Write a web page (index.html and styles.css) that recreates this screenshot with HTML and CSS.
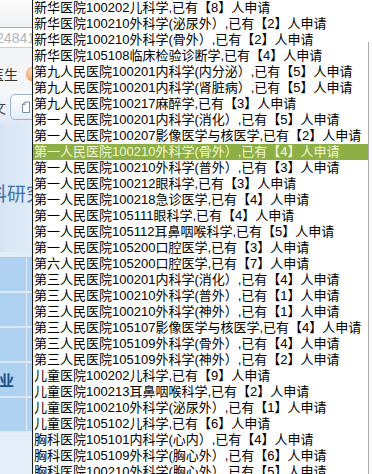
FILE: index.html
```html
<!DOCTYPE html>
<html>
<head>
<meta charset="utf-8">
<title>报名查询</title>
<link rel="stylesheet" href="styles.css">
</head>
<body>
<div class="page">
	<div class="side">
		<div class="topbar"></div>
		<div class="search"><span>24841</span></div>
		<div class="user"><span>主任医生</span><i class="avatar"></i></div>
		<div class="tabs">
			<span class="tab-text">论文</span>
			<span class="tab">
				<svg width="10" height="12" viewBox="0 0 10 12"><path d="M1.5 11.5V3.5L4 1h4.5v10.5z M4 1v2.5H1.5" fill="#fff" stroke="#7a8da3" stroke-width="1"/></svg>
			</span>
		</div>
		<div class="banner"><span>医学科研究</span></div>
		<div class="band"></div>
		<div class="row"><div class="cell"></div><div class="cell"></div></div>
		<div class="row"><div class="cell"></div><div class="cell"></div></div>
		<div class="row"><div class="cell"></div><div class="cell"></div></div>
		<div class="row"><div class="cell"><span>专业</span></div><div class="cell"></div></div>
		<div class="row"><div class="cell"></div><div class="cell"></div></div>
		<div class="rest"></div>
	</div>
	<div class="main">
		<div class="frame"></div>
	</div>
</div>

<ul class="suggest">
	<li>新华医院100202儿科学,已有【8】人申请</li>
	<li>新华医院100210外科学(泌尿外）,已有【2】人申请</li>
	<li>新华医院100210外科学(骨外）,已有【2】人申请</li>
	<li>新华医院105108临床检验诊断学,已有【4】人申请</li>
	<li>第九人民医院100201内科学(内分泌）,已有【5】人申请</li>
	<li>第九人民医院100201内科学(肾脏病）,已有【5】人申请</li>
	<li>第九人民医院100217麻醉学,已有【3】人申请</li>
	<li>第一人民医院100201内科学(消化）,已有【5】人申请</li>
	<li>第一人民医院100207影像医学与核医学,已有【2】人申请</li>
	<li class="on">第一人民医院100210外科学(骨外）,已有【4】人申请</li>
	<li>第一人民医院100210外科学(普外）,已有【3】人申请</li>
	<li>第一人民医院100212眼科学,已有【3】人申请</li>
	<li>第一人民医院100218急诊医学,已有【4】人申请</li>
	<li>第一人民医院105111眼科学,已有【4】人申请</li>
	<li>第一人民医院105112耳鼻咽喉科学,已有【5】人申请</li>
	<li>第一人民医院105200口腔医学,已有【3】人申请</li>
	<li>第六人民医院105200口腔医学,已有【7】人申请</li>
	<li>第三人民医院100201内科学(消化）,已有【4】人申请</li>
	<li>第三人民医院100210外科学(普外）,已有【1】人申请</li>
	<li>第三人民医院100210外科学(神外）,已有【1】人申请</li>
	<li>第三人民医院105107影像医学与核医学,已有【4】人申请</li>
	<li>第三人民医院105109外科学(骨外）,已有【4】人申请</li>
	<li>第三人民医院105109外科学(神外）,已有【2】人申请</li>
	<li>儿童医院100202儿科学,已有【9】人申请</li>
	<li>儿童医院100213耳鼻咽喉科学,已有【2】人申请</li>
	<li>儿童医院100210外科学(泌尿外）,已有【1】人申请</li>
	<li>儿童医院105102儿科学,已有【6】人申请</li>
	<li>胸科医院105101内科学(心内）,已有【4】人申请</li>
	<li>胸科医院105109外科学(胸心外）,已有【6】人申请</li>
	<li>胸科医院100210外科学(胸心外）,已有【5】人申请</li>
</ul>
</body>
</html>
```

FILE: styles.css
```css
body {
	margin:0;
	font-family:"Noto Sans CJK SC", sans-serif;
	background:#fff;
	overflow:hidden;
}
.page {
	display:flex;
	height:474px;
}
.side {
	width:32px;
	flex:none;
	overflow:hidden;
	display:flex;
	flex-direction:column;
	background:#f4f5f7;
}
.side > div {
	display:flex;
	justify-content:flex-end;
	align-items:center;
	white-space:nowrap;
	flex:none;
}
.side > div > * { flex:none; }
.topbar {
	height:27px;
	background:linear-gradient(#fbfbfb, #f0f1f3);
}
.search {
	height:19px;
	background:#fff;
	border-top:1px solid #a5acb5;
	border-bottom:1px solid #c9ced4;
	font-family:"Liberation Sans", sans-serif;
	font-size:14px;
	color:#b2b6bb;
}
.search span { margin-right:-3px; }
.user {
	height:42px;
	font-size:14px;
	color:#333;
}
.user span { margin-top:10px; }
.avatar {
	width:16px;
	height:16px;
	margin:10px -10px 0 8px;
	border-radius:50%;
	background:radial-gradient(circle at 40% 35%, #fde3c4, #f09a55 70%, #d9762e);
}
.tabs {
	height:34px;
	background:linear-gradient(#f6f9fc, #dfe9f4);
	font-size:14px;
	color:#444;
}
.tab-text { margin-right:4px; }
.tab {
	width:40px;
	height:26px;
	margin-right:-18px;
	border:1px solid #9db2c9;
	border-radius:5px;
	background:linear-gradient(#ffffff, #e4edf7);
	display:flex;
	align-items:center;
	padding-left:10px;
	box-sizing:border-box;
}
.banner {
	height:128px;
	background:linear-gradient(90deg, #d5e4f4, #e1ecf8);
	font-size:19px;
	color:#3f6fa6;
}
.banner span { margin:8px -13px 0 0; }
.band {
	height:5px;
	background:#e3edf8;
	border-bottom:1px solid #b8c7d8;
}
.side .row {
	height:35px;
	align-items:stretch;
	justify-content:flex-start;
}
.cell {
	width:5px;
	background:#afd1f2;
	border-bottom:2px solid #dbe9f7;
}
.cell:first-child {
	width:26px;
	border-right:1px solid #e2eefa;
	display:flex;
	justify-content:flex-end;
	align-items:center;
	overflow:hidden;
	font-weight:bold;
	font-size:15px;
	color:#1e4f86;
}
.cell span { flex:none; margin-right:12px; }
.side .rest {
	flex:1;
	background:#e4eef9;
}
.main {
	flex:1;
}
.frame {
	margin:42px 0 0 336px;
	height:432px;
	border-left:1px solid #a9adb2;
	background:#fbfbfb;
}
.suggest {
	position:absolute;
	top:0;
	left:32px;
	width:335px;
	height:474px;
	margin:0;
	padding:0;
	list-style:none;
	background:#fff;
	border-left:1px solid #1a1a1a;
	overflow:hidden;
	font-family:"Liberation Sans", "Noto Sans CJK SC", sans-serif;
	font-size:13px;
	line-height:16px;
	color:#000;
}
.suggest li {
	height:16px;
	padding-left:1px;
	white-space:nowrap;
}
.suggest li.on {
	background:#8daf45;
	color:#f2f6da;
}
```
